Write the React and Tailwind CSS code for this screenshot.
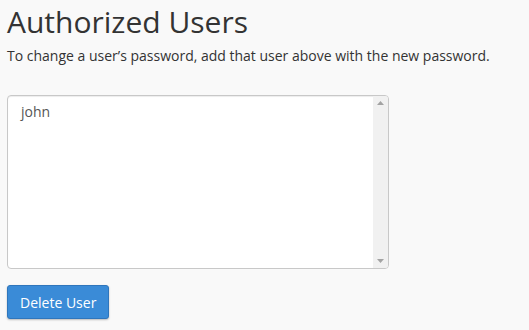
export default function App() {
  return (
    <div className="min-h-[330px] w-[529px] bg-[#f9f9f9] px-[7px] pt-[2px] text-[#333]" style={{ fontFamily: '"Open Sans", sans-serif' }}>
      <h1 className="text-[30px] leading-[40px] font-normal text-[#333]">Authorized Users</h1>
      <p className="mt-[4px] text-[14px] leading-[20px] text-[#333]">To change a user’s password, add that user above with the new password.</p>
      <div className="mt-[29px] flex h-[174px] w-[382px] overflow-hidden rounded-[4px] border border-[#c8c8c8] bg-white shadow-[inset_0_1px_1px_rgba(0,0,0,0.075)]">
        <div className="flex-1 px-[13px] pt-[6px] text-[14px] leading-[20px] text-[#555]">john</div>
        <div className="flex w-[15px] flex-col items-center justify-between bg-[#f1f1f1] py-[5px]">
          <svg width="7" height="4" viewBox="0 0 7 4"><path d="M3.5 0L7 4H0z" fill="#a3a3a3" /></svg>
          <svg width="7" height="4" viewBox="0 0 7 4"><path d="M0 0H7L3.5 4z" fill="#a3a3a3" /></svg>
        </div>
      </div>
      <button className="mt-[16px] flex h-[34px] items-center rounded-[3px] border border-[#2f76bc] bg-[#3a8bd7] px-[12px] text-[14px] text-white shadow-[0_1px_2px_rgba(0,0,0,0.25)]">Delete User</button>
    </div>
  );
}
